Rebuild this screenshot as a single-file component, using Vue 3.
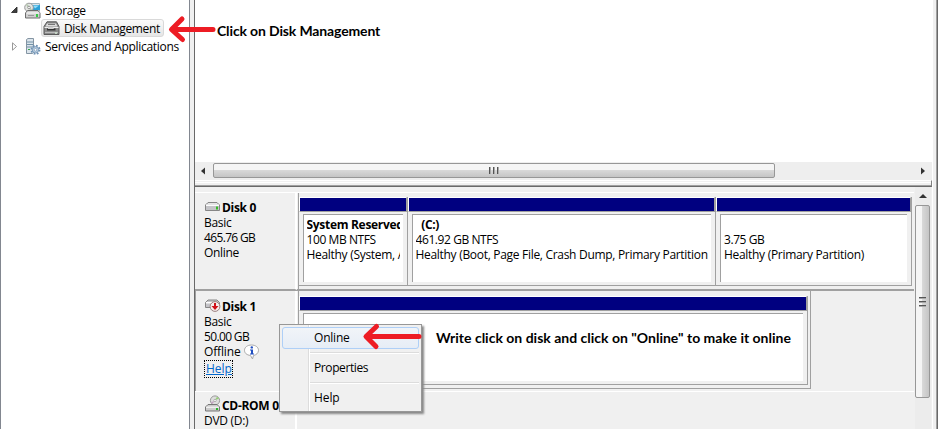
<script setup>
const disk0 = [
  { size: 'p-reserved', name: 'System Reserved', info: '100 MB NTFS', status: 'Healthy (System, A' },
  { size: 'p-system', name: '\u00a0\u00a0(C:)', info: '461.92 GB NTFS', status: 'Healthy (Boot, Page File, Crash Dump, Primary Partition' },
  { size: 'p-extra', name: '', info: '3.75 GB', status: 'Healthy (Primary Partition)' },
]
</script>

<template>
  <div class="window">
    <nav class="tree">
      <div class="node">
        <svg class="twisty" width="8" height="8" viewBox="0 0 8 8"><path d="M6.5 1v5.5H1z" fill="#404040" stroke="#222" stroke-width=".8" /></svg>
        <svg class="icon" width="17" height="17" viewBox="0 0 17 17">
          <path d="M6 1.5h9.5V9H6z" fill="#d9e6ec" stroke="#9db4c0" />
          <path d="M8 3h8v5H8z" fill="#2b9fd6" /><path d="M9 3.5h6l-4 3z" fill="#8fdcf8" />
          <circle cx="5" cy="5.5" r="4.3" fill="#e4e6e3" stroke="#999" /><path d="M5 5.5L2.5 2.2M5 5.5l2.8 3" stroke="#b5c8ae" stroke-width="1.5" /><circle cx="5" cy="5.5" r="1.3" fill="#fff" stroke="#777" stroke-width=".7" />
          <path d="M1.5 11l2-2.5h10.500l2 2.500v5h-14.500z" fill="#cfcfcf" stroke="#6c6c6c" /><path d="M2.500 11h13" stroke="#fff" /><path d="M4 13.500h6" stroke="#999" /><rect x="12" y="12" width="2" height="3" fill="#35c846" />
        </svg>
        <span>Storage</span>
      </div>
      <div class="node child">
        <div class="selected">
          <svg class="icon" width="17" height="15" viewBox="0 0 17 15">
            <path d="M4 .8h9.500L16 5.500v8H1v-8z" fill="#8b8b8b" stroke="#5a5a5a" />
            <path d="M4 2.500h9l1.500 3h-12z" fill="#dcdcdc" />
            <path d="M5 3.500h7" stroke="#777" />
            <path d="M1.500 6.500h14" stroke="#efefef" />
            <path d="M4 7.500h8.500v2H4z" fill="#333" /><path d="M5 6h5l1 2H5z" fill="#d0d0d0" />
            <path d="M2 11.500h13" stroke="#bbb" /><rect x="12" y="11" width="2" height="2" fill="#c5d5c5" />
          </svg>
          <span>Disk Management</span>
        </div>
      </div>
      <div class="node">
        <svg class="twisty" width="8" height="9" viewBox="0 0 8 9"><path d="M2 .8v7.400l4-3.700z" fill="#fff" stroke="#999" /></svg>
        <svg class="icon" width="17" height="17" viewBox="0 0 17 17">
          <path d="M2.500 1.500L4 .5h5.500v14l-1 1h-6z" fill="#dbe4eb" stroke="#8495a3" /><path d="M3 4h6M3 6.500h6M3 9h6" stroke="#7292a8" /><rect x="4" y="11" width="2" height="1" fill="#37a64a" />
          <circle cx="11.500" cy="11.800" r="4" fill="none" stroke="#6f92b5" stroke-width="2" stroke-dasharray="1.700 1.440" /><circle cx="11.500" cy="11.800" r="3.200" fill="#b7cce0" stroke="#7191ae" stroke-width=".8" /><circle cx="11.500" cy="11.800" r="1.300" fill="#fff" stroke="#7191ae" stroke-width=".6" />
        </svg>
        <span>Services and Applications</span>
      </div>
    </nav>
    <div class="splitter"></div>

    <main class="content">
      <section class="volumes"></section>
      <div class="hscroll">
        <svg width="18" height="16" viewBox="0 0 18 16"><path d="M10 4.500v7L6 8z" fill="#333" /></svg>
        <div class="hthumb"><i></i><i></i><i></i></div>
        <svg class="right-arrow" width="18" height="16" viewBox="0 0 18 16"><path d="M7 4.500v7L11 8z" fill="#333" /></svg>
      </div>
      <div class="hsplit"></div>
      <section class="graph">
        <div class="disks">
          <div class="disk first">
            <div class="label">
              <div class="title">
                <svg width="17" height="14" viewBox="0 0 17 14"><path d="M1.500 4L4 1.500h9L15.500 4v5.500h-14z" fill="#c4c4c8" stroke="#868686" /><path d="M2 4.200h13" stroke="#fff" stroke-width="1.500" /><path d="M4 2.500h9" stroke="#e4e4e4" /><rect x="12" y="5.500" width="2" height="3" fill="#35bd25" /></svg>
                <b>Disk 0</b>
              </div>
              <p>Basic</p><p class="num">465.76 GB</p><p>Online</p>
            </div>
            <div class="strip">
              <div v-for="p in disk0" :key="p.size" class="part" :class="p.size">
                <div class="bar"></div>
                <div class="box"><b>{{ p.name }}</b><p class="info">{{ p.info }}</p><p>{{ p.status }}</p></div>
              </div>
            </div>
          </div>
          <div class="disk second">
            <div class="label">
              <div class="title">
                <svg width="17" height="16" viewBox="0 0 17 16"><path d="M1.500 3.500L4 1h9l2.500 2.500v5h-14z" fill="#c4c4c8" stroke="#868686" /><path d="M2 3.700h10" stroke="#fff" stroke-width="1.500" /><circle cx="11" cy="7.500" r="4.900" fill="#f6eded" stroke="#9a8080" /><path d="M10 4h2v3h2.500L11 11 7.500 7H10z" fill="#d0101a" /></svg>
                <b>Disk 1</b>
              </div>
              <p>Basic</p><p class="num">50.00 GB</p>
              <p class="offline"><span>Offline</span>
                <svg width="17" height="16" viewBox="0 0 17 16"><path d="M8.500 1c4 0 7 2.200 7 5.300 0 3-2.500 4.700-5 5.200L9.500 15l-2-3.500C3.500 11 1.500 9 1.500 6.300 1.500 3.200 4.500 1 8.500 1z" fill="#fff" stroke="#aaa" /><circle cx="8.800" cy="3.400" r="1.200" fill="#224fc0" /><path d="M7 5.500h3v4h1v1H7v-1h1v-3H7z" fill="#224fc0" /></svg>
              </p>
              <a class="help">Help</a>
            </div>
            <div class="strip">
              <div class="part p-offline"><div class="bar"></div><div class="box"></div></div>
            </div>
          </div>
          <div class="disk third">
            <div class="label">
              <div class="title">
                <svg class="cd" width="17" height="17" viewBox="0 0 17 17"><circle cx="11" cy="5.500" r="4.600" fill="#dedede" stroke="#999" /><path d="M11 5L13 1.800l2 2z" fill="#94cf75" /><path d="M11 6L8 9l-1-2z" fill="#c4a0c2" /><circle cx="11" cy="5.500" r="1.200" fill="#fff" stroke="#888" stroke-width=".6" /><path d="M1.500 12L4 9.500h9l2.500 2.500v4h-14z" fill="#ccc" stroke="#777" /><path d="M2 12.200h13" stroke="#fff" /><rect x="12" y="13" width="2" height="2" fill="#29b52c" /></svg>
                <b>CD-ROM 0</b>
              </div>
              <p>DVD (D:)</p>
            </div>
          </div>
        </div>
        <div class="vscroll">
          <svg width="16" height="18" viewBox="0 0 16 18"><path d="M4 11h8L8 7z" fill="#333" /></svg>
          <div class="vthumb"><i></i><i></i><i></i></div>
        </div>
      </section>
    </main>
    <div class="edge"></div>

    <div class="menu">
      <div class="item active">Online</div><hr />
      <div class="item">Properties</div><hr />
      <div class="item">Help</div>
    </div>
    <svg class="arrow a1" width="50" height="32" viewBox="0 0 50 32"><path d="M46 16.500H8M15 6L4.500 16.500l11 10" /></svg>
    <svg class="arrow a2" width="62" height="30" viewBox="0 0 62 30"><path d="M58 14.500H6M15.500 4.500L5 14.500l10 10" /></svg>
    <b class="note n1">Click on Disk Management</b>
    <b class="note n2">Write click on disk and click on "Online" to make it online</b>
  </div>
</template>

<style>
body { background: #fff; overflow: hidden; }
</style>
<style scoped>
* { box-sizing: border-box; }
p { margin: 0; }
.window { position: relative; display: flex; width: 940px; height: 429px; overflow: hidden; background: #fff; color: #000; font: 12px/15px "Open Sans", "Noto Sans", sans-serif; white-space: nowrap; letter-spacing: -.3px; }
svg { flex: none; }
.tree { width: 190px; padding: 1px 0 0 9px; border-left: 1px solid #828790; border-right: 1px solid #828790; }
.node { display: flex; align-items: center; height: 18px; }
.twisty { width: 9px; margin-right: 5px; }
.node > .icon { margin-right: 4px; }
.child { padding-left: 31px; }
.selected { display: flex; align-items: center; gap: 4px; width: 123px; height: 18px; padding-left: 1px; border: 1px solid #d9d9d9; border-radius: 3px; background: linear-gradient(#fafafa, #e6e6e6); letter-spacing: -.35px; }
.splitter { width: 4px; background: #f0f0f0; }
.content { display: flex; flex-direction: column; width: 738px; border-left: 1px solid #696969; }
.volumes { height: 162px; background: #fff; }
.hscroll { display: flex; height: 18px; padding-top: 1px; background: #eee; }
.hthumb { display: flex; justify-content: center; align-items: center; gap: 2px; width: 562px; height: 15px; border: 1px solid #979797; border-radius: 2px; background: linear-gradient(#f5f5f5 0 45%, #d8d8d8 50%, #c5c5c5); }
.hthumb i { width: 2px; height: 7px; background: linear-gradient(90deg, #555 50%, #aaa 50%); }
.right-arrow { margin-left: auto; }
.hsplit { height: 7px; border-top: 1px solid #fff; border-right: 1px solid #808080; border-bottom: 1px solid #696969; background: linear-gradient(#f0f0f0 0 1px, #fff 1px 2px, #f0f0f0 2px 4px, #a0a0a0 4px); }
.graph { display: flex; flex: 1; min-height: 0; background: #f0f0f0; }
.disks { width: 720px; padding-top: 5px; }
.disk { display: flex; margin-right: 1px; border-top: 1px solid #fff; }
.label { width: 102px; padding-left: 9px; border-right: 2px solid #fff; }
.title { display: flex; align-items: center; height: 15px; }
.title b { font-size: 12px; margin-left: 1px; }
.first { height: 98px; border-bottom: 1px solid #a0a0a0; }
.first .label { padding-top: 7px; height: 97px; border-bottom: 1px solid #a0a0a0; }
.strip { display: flex; margin-left: 1px; padding: 4px 0 0 0; border-left: 1px solid #a0a0a0; }
.part { display: flex; flex-direction: column; height: 89px; border-right: 1px solid #a0a0a0; border-bottom: 1px solid #a0a0a0; }
.bar { flex: none; height: 15px; border: 1px solid; border-color: #fff #a0a0a0 #a0a0a0 #fff; background: #000080; }
.box { flex: 1; overflow: hidden; margin: 2px 4px 3px 4px; padding: 2px 2px 0 3px; border-left: 1px solid #a0a0a0; border-top: 1px solid #a0a0a0; background: #fff; }
.box b, .box p { display: block; height: 15px; overflow: hidden; }
.num { letter-spacing: -.65px; }
.box .info { letter-spacing: -.42px; }
.p-reserved { width: 109px; }
.p-reserved .box { padding-right: 3px; padding-left: 2.5px; }
.p-system { width: 308px; }
.p-system .box { padding-left: 2.5px; }
.p-extra { width: 196px; }
.p-offline { width: 509px; }
.second { height: 101px; border-top: 1px solid #a0a0a0; }
.second .label { padding-top: 8px; border-right-color: #fff; border-left: 1px solid #a0a0a0; padding-left: 8px; }
.second .strip { width: 513px; height: 98px; padding-top: 5px; border-right: 1px solid #a0a0a0; border-bottom: 1px solid #a0a0a0; }
.third { height: 38px; }
.third .label { padding-top: 6px; }
.cd { margin-top: -4px; }
.offline { display: flex; align-items: center; gap: 2px; height: 15px; letter-spacing: -.15px; }
.help { display: block; width: 29px; height: 18px; margin-top: 1px; padding-left: 1px; border: 1px dotted #000; color: #0066cc; line-height: 16px; text-decoration: underline; letter-spacing: 0; }
.vscroll { width: 16px; background: #ececec; }
.vscroll svg { display: block; }
.vthumb { display: flex; flex-direction: column; align-items: center; justify-content: center; gap: 2px; height: 193px; width: 15px; border: 1px solid #979797; border-radius: 2px; background: linear-gradient(90deg, #f5f5f5 0 45%, #d8d8d8 50%, #c5c5c5); }
.vthumb i { width: 7px; height: 2px; background: linear-gradient(#555 50%, #aaa 50%); }
.edge { width: 6px; background: linear-gradient(90deg, #fff 1px, #f0f0f0 1px 4px, #a0a0a0 4px); border-right: 1px solid #696969; }
.menu { position: absolute; left: 279px; top: 324px; width: 143px; height: 88px; padding: 2px; border: 1px solid #979797; background: linear-gradient(90deg, #f0f0f0 28px, #dcdcdc 28px 29px, #fff 29px 30px, #f0f0f0 30px); box-shadow: 2px 2px 2px #888; }
.item { height: 22px; padding-left: 32px; line-height: 22px; letter-spacing: -.4px; }
.item:last-child { letter-spacing: -.1px; }
.active { border: 1px solid #aecff7; border-radius: 3px; padding-left: 31px; line-height: 20px; background: linear-gradient(#f1f4f8, #e6edf6); letter-spacing: -.2px; }
hr { height: 2px; margin: 3px 0 3px 28px; border: 0; background: linear-gradient(#dcdcdc 50%, #fff 50%); }
.arrow { position: absolute; fill: none; stroke: #ed1c24; stroke-width: 5; stroke-linecap: round; stroke-linejoin: round; }
.a1 { left: 167px; top: 13px; }
.a2 { left: 361px; top: 322px; }
.note { position: absolute; font: bold 14px/18px Lato, sans-serif; }
.n1 { left: 217px; top: 22px; letter-spacing: -.14px; }
.n2 { left: 436px; top: 329px; letter-spacing: 0; }
</style>
